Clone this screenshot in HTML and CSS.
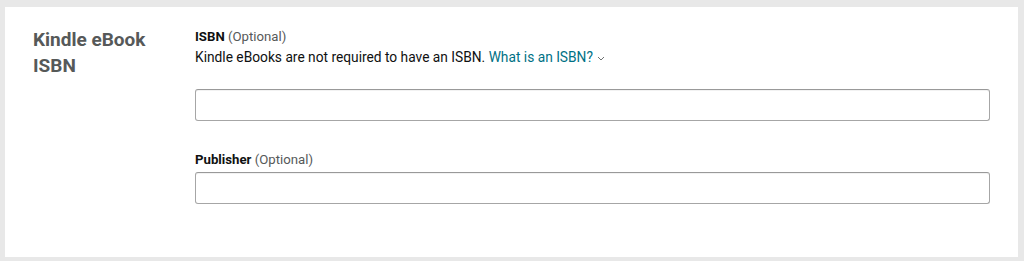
FILE: index.html
```html
<!DOCTYPE html>
<html>
<head>
<meta charset="utf-8">
<link rel="stylesheet" href="styles.css">
</head>
<body>
<div class="panel">
  <h2 class="section-title">Kindle eBook<br>ISBN</h2>
  <div class="fields">
    <div class="field">
      <div class="label"><b>ISBN</b> <span class="opt">(Optional)</span></div>
      <div class="help">Kindle eBooks are not required to have an ISBN. <a class="link" href="#">What is an ISBN?</a> <svg class="chev" width="8" height="5" viewBox="0 0 8 5"><path d="M1 1l3 3 3-3" fill="none" stroke="#6f7373" stroke-width="1"/></svg></div>
      <input class="input first" type="text">
    </div>
    <div class="field second">
      <div class="label"><b>Publisher</b> <span class="opt">(Optional)</span></div>
      <input class="input" type="text">
    </div>
  </div>
</div>
</body>
</html>
```
FILE: styles.css
```css
html, body {
  margin: 0;
  padding: 0;
  background: #e8e8e8;
}
body {
  padding: 7px 6px 4px 5px;
  font-family: Roboto, "Liberation Sans", Arial, sans-serif;
  color: #0f1111;
}
.panel {
  background: #fff;
  height: 250px;
  box-sizing: border-box;
  padding: 19px 28px 0 28px;
  display: grid;
  grid-template-columns: 162px 1fr;
  align-items: start;
}
.section-title {
  margin: 0;
  padding-top: 1px;
  font-size: 19px;
  line-height: 26px;
  font-weight: 700;
  color: #565959;
}
.fields {
  display: flex;
  flex-direction: column;
}
.label {
  font-size: 13.2px;
  line-height: 20px;
  margin-top: 1px;
}
.label b {
  font-weight: 700;
}
.opt {
  color: #565959;
}
.help {
  font-size: 13.75px;
  line-height: 20px;
}
.link {
  color: #007185;
  text-decoration: none;
}
.chev {
  vertical-align: middle;
  margin-left: 1px;
}
.input {
  display: block;
  box-sizing: border-box;
  width: 100%;
  height: 32px;
  margin: 0;
  padding: 0 8px;
  border: 1px solid #a6a6a6;
  border-top-color: #999;
  border-radius: 3px;
  background: #fff;
  box-shadow: 0 1px 0 rgba(0,0,0,.05) inset;
  outline: none;
}
.input.first {
  margin-top: 22px;
}
.second {
  margin-top: 28px;
}
.second .input {
  margin-top: 2px;
}
```
